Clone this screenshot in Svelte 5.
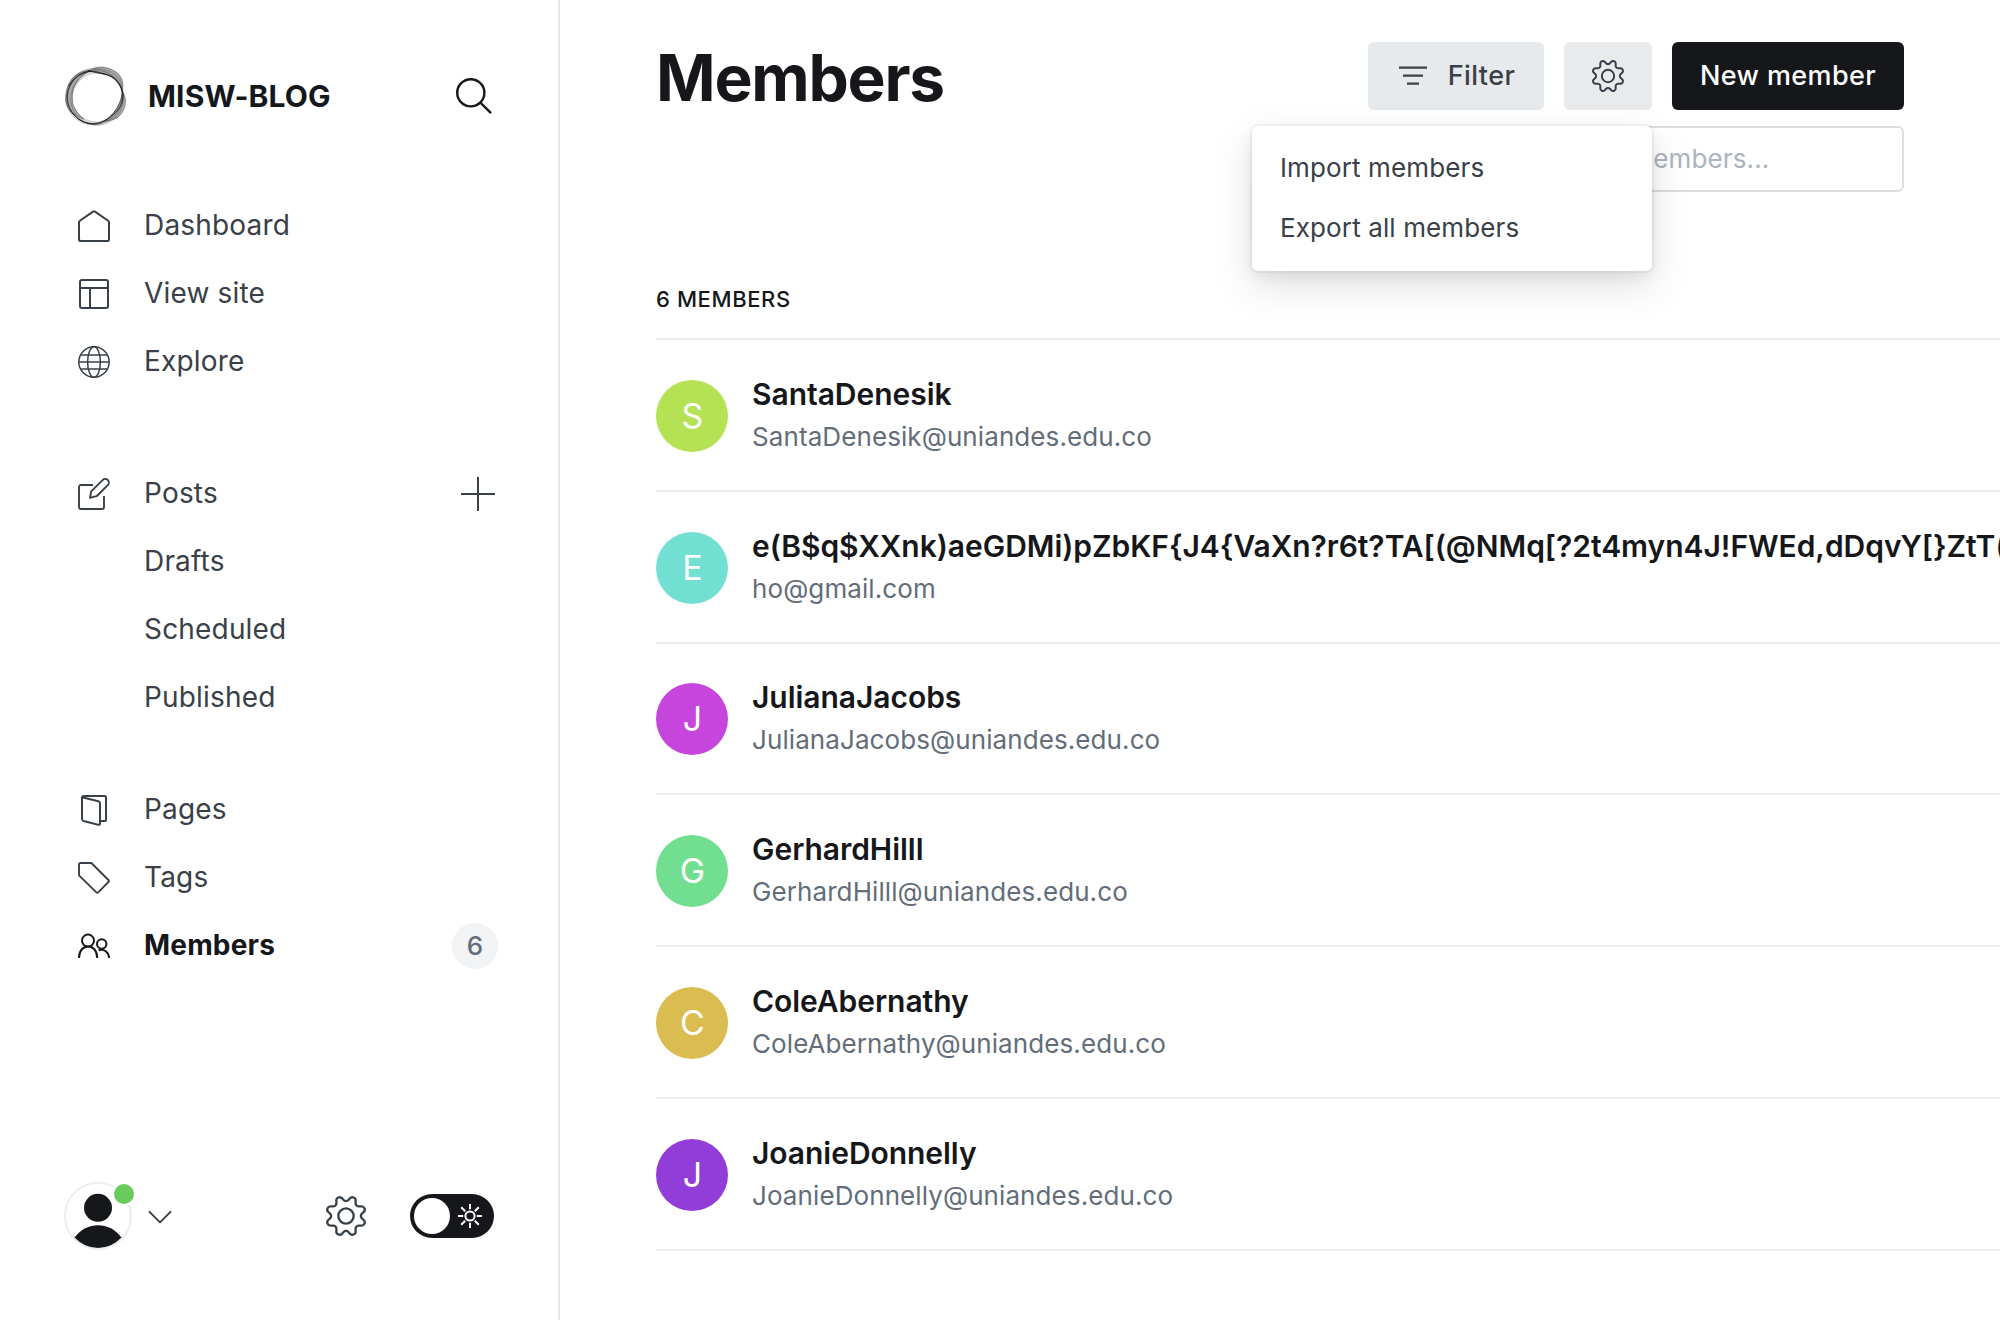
<script>
  const members = [
    { name: 'SantaDenesik', email: 'SantaDenesik@uniandes.edu.co', tone: 'lime' },
    {
      name: 'e(B$q$XXnk)aeGDMi)pZbKF{J4{VaXn?r6t?TA[(@NMq[?2t4myn4J!FWEd,dDqvY[}ZtT(',
      email: 'ho@gmail.com',
      tone: 'teal'
    },
    { name: 'JulianaJacobs', email: 'JulianaJacobs@uniandes.edu.co', tone: 'magenta' },
    { name: 'GerhardHilll', email: 'GerhardHilll@uniandes.edu.co', tone: 'green' },
    { name: 'ColeAbernathy', email: 'ColeAbernathy@uniandes.edu.co', tone: 'gold' },
    { name: 'JoanieDonnelly', email: 'JoanieDonnelly@uniandes.edu.co', tone: 'violet' }
  ];
  const actions = ['Import members', 'Export all members'];
  const postFilters = ['Drafts', 'Scheduled', 'Published'];
</script>

{#snippet cog()}
  <path d="M10.546 2.438a1.957 1.957 0 0 0 2.908 0L14.4 1.4a1.959 1.959 0 0 1 3.41 1.413l-.071 1.4A1.958 1.958 0 0 0 19.79 6.27l1.4-.071A1.959 1.959 0 0 1 22.6 9.606l-1.041.94a1.96 1.96 0 0 0 0 2.909l1.041.94a1.959 1.959 0 0 1-1.413 3.41l-1.4-.071a1.958 1.958 0 0 0-2.056 2.056l.071 1.4A1.959 1.959 0 0 1 14.4 22.6l-.941-1.041a1.959 1.959 0 0 0-2.908 0L9.606 22.6A1.959 1.959 0 0 1 6.2 21.192l.072-1.4a1.958 1.958 0 0 0-2.056-2.056l-1.4.071A1.958 1.958 0 0 1 1.4 14.4l1.041-.94a1.96 1.96 0 0 0 0-2.909L1.4 9.606A1.958 1.958 0 0 1 2.809 6.2l1.4.071a1.958 1.958 0 0 0 2.058-2.06L6.2 2.81A1.959 1.959 0 0 1 9.606 1.4z" />
  <circle cx="12" cy="12" r="4.6" />
{/snippet}

<div class="app">
  <nav class="sidebar">
    <header class="brand">
      <svg class="logo" viewBox="0 0 182 180">
        <path class="band" fill-rule="evenodd" d="M104 2C132 2 166 18 172 42C175 56 168 66 172 78C180 92 184 108 176 124C170 144 160 158 140 163C124 172 104 179 86 178C56 174 34 160 18 142C2 128-3 102 2 80C4 52 22 26 50 14C70 6 86 4 104 2ZM88 23C60 26 38 46 28 70C18 98 22 122 40 142C58 160 80 169 104 166C132 160 154 140 164 112C172 92 172 76 162 58C150 36 118 20 88 23Z" />
        <path class="shade" d="M74 14C88 2 122-4 152 18C178 38 174 62 171 76C166 48 142 24 106 22Z" />
        <path class="shade" d="M2 108C-2 58 24 14 76 14C44 28 16 62 22 104C22 124 40 146 56 160C24 146 8 132 2 108Z" />
        <path class="shade" d="M172 76C184 96 184 118 172 138C160 158 138 164 118 166C150 144 174 112 172 76Z" />
        <ellipse cx="90" cy="93" rx="87" ry="82" transform="rotate(48 90 93)" />
        <ellipse cx="88" cy="95" rx="86" ry="80" transform="rotate(-28 88 95)" />
        <ellipse cx="96" cy="92" rx="85" ry="77" transform="rotate(-60 96 92)" />
        <path class="dark" d="M68 13C90 22 120 22 140 32C164 46 168 64 172 78C178 104 164 130 144 146C118 170 78 184 40 160C14 140 2 112 8 78C16 44 40 20 76 14" />
        <path class="dark" d="M12 60C30 24 70 8 104 20C140 26 162 46 171 76C170 120 132 168 92 174C60 176 30 158 14 130" />
      </svg>
      <span class="brand-name">MISW-BLOG</span>
      <svg class="search" viewBox="0 0 36 36"><circle cx="14.8" cy="14.8" r="13.6" /><path d="M24.4 24.6L35 35.2" /></svg>
    </header>

    <ul class="group">
      <li>
        <svg viewBox="0 0 32 32"><path d="M1 12.4V29.2C1 30.4 1.700 31 2.800 31H29.200C30.400 31 31 30.300 31 29.200V12.400C31 11.700 30.700 11.200 30.100 10.800L17 1.600C16.400 1.100 15.600 1.100 15 1.600L1.900 10.800C1.300 11.200 1 11.700 1 12.400Z" /></svg>
        <span>Dashboard</span>
      </li>
      <li>
        <svg viewBox="0 0 32 32"><rect x="2" y="2" width="28" height="28" rx="2" /><path d="M2 10H30M12 10V30" /></svg>
        <span>View site</span>
      </li>
      <li>
        <svg class="fine" viewBox="0 0 32 32"><circle cx="16" cy="16" r="15.2" /><ellipse cx="16" cy="16" rx="6.4" ry="15.2" /><path d="M1 16H31M3 9H29M3 23H29" /></svg>
        <span>Explore</span>
      </li>
    </ul>

    <ul class="group posts">
      <li>
        <svg class="thin" viewBox="0 0 32 32"><path d="M15 7H3C1.800 7 1 7.800 1 9V29C1 30.200 1.800 31 3 31H24C25.200 31 26 30.200 26 29V18" /><path d="M18.600 18.200L12 19.800L13.200 13.400L24.600 2.100A3 3 0 0 1 29.800 7.200Z" /></svg>
        <span>Posts</span>
        <svg class="plus" viewBox="0 0 34 34"><path d="M17 0V34M0 17H34" /></svg>
      </li>
      {#each postFilters as label}
        <li class="sub"><span>{label}</span></li>
      {/each}
    </ul>

    <ul class="group">
      <li>
        <svg viewBox="0 0 32 32"><path d="M4.100 3.200L20.300 7.300C21.400 7.600 22 8.200 22 9.400V29.400C22 30.500 21.200 31 20.200 30.700L5.600 27C4.600 26.700 4 26.100 4 25V3.800C4 2.500 4.700 2 5.800 2H26.200C27.300 2 28 2.700 28 3.800V25.400C28 26.500 27.300 27 26.200 27H22.600" /></svg>
        <span>Pages</span>
      </li>
      <li>
        <svg class="thin" viewBox="0 0 32 32"><path d="M1 2.600C1 1.600 1.600 1 2.600 1H13.400L30.400 18C31.200 18.800 31.200 19.200 30.400 20L20.200 30.400C19.600 31 19 31 18.400 30.400L1 13.400Z" /></svg>
        <span>Tags</span>
      </li>
      <li class="active">
        <svg viewBox="0 0 32 32"><circle cx="10" cy="10.600" r="6" /><circle cx="23.700" cy="14" r="4.700" /><path d="M1 28C1 12.500 19.200 12.500 19.200 28M20.600 20.400C25.800 18.200 31 22.400 31 28" /></svg>
        <span>Members</span>
        <b class="count">6</b>
      </li>
    </ul>

    <footer>
      <div class="user">
        <svg viewBox="0 0 64 64"><circle cx="32" cy="23.800" r="14" /><path d="M8.500 53.600C20.500 37 43.500 37 55.500 53.600A32 32 0 0 1 8.500 53.600Z" /></svg>
        <i class="dot"></i>
      </div>
      <svg class="chevron" viewBox="0 0 24 14"><path d="M1 1.400L12 12.400L23 1.400" /></svg>
      <svg class="cog" viewBox="0 0 24 24">{@render cog()}</svg>
      <div class="toggle">
        <i class="knob"></i>
        <svg viewBox="0 0 24 24"><circle cx="12" cy="12" r="4.600" /><path d="M12 0V5.200M12 18.800V24M0 12H5.200M18.800 12H24M3.200 3.200L7.200 7.200M16.800 16.800L20.800 20.800M3.200 20.800L7.200 16.800M16.800 7.200L20.800 3.200" /></svg>
      </div>
    </footer>
  </nav>

  <main>
    <div class="top">
      <h1>Members</h1>
      <div class="controls">
        <div class="buttons">
          <button class="filter">
            <svg viewBox="0 0 28 20"><path d="M0 1.600H28M4 9.600H24M8 17.600H20" /></svg>
            <span>Filter</span>
          </button>
          <div class="menu-anchor">
            <button class="settings"><svg viewBox="0 0 24 24">{@render cog()}</svg></button>
            <div class="menu">
              {#each actions as action}
                <span>{action}</span>
              {/each}
            </div>
          </div>
          <button class="new">New member</button>
        </div>
        <div class="field">Search members...</div>
      </div>
    </div>

    <div class="list-head">6 members</div>
    <div class="list">
      {#each members as member}
        <div class="row">
          <div class="avatar {member.tone}">{member.name[0].toUpperCase()}</div>
          <div class="who">
            <h3>{member.name}</h3>
            <p>{member.email}</p>
          </div>
        </div>
      {/each}
    </div>
  </main>
</div>

<style>
  :global(body) { background: #fff; }
  .app {
    display: flex;
    width: 2000px;
    height: 1320px;
    overflow: hidden;
    background: #fff;
    font-family: Inter, "Liberation Sans", sans-serif;
    color: #15171a;
  }
  svg {
    display: block;
    flex: none;
    fill: none;
    stroke: currentColor;
    stroke-width: 2;
    stroke-linejoin: round;
    overflow: visible;
  }
  h1, h3, p, ul { margin: 0; padding: 0; }

  .sidebar {
    box-sizing: border-box;
    width: 560px;
    flex: none;
    display: flex;
    flex-direction: column;
    border-right: 2px solid #e6e7e8;
  }
  .brand { display: flex; align-items: center; height: 60px; padding: 66px 66px 0 65px; }
  .logo { width: 61px; height: 60px; stroke: #222; stroke-width: 2; }
  .logo .band { fill: #777; fill-opacity: 0.3; stroke: none; }
  .logo .shade { fill: #555; fill-opacity: 0.36; stroke: #444; stroke-width: 1.500; }
  .logo ellipse { stroke-opacity: 0.35; }
  .logo .dark { stroke: #111; stroke-opacity: 0.8; stroke-width: 2.800; }
  .brand-name { margin-left: 22px; font-size: 30px; font-weight: 700; line-height: 36px; letter-spacing: 0.130px; }
  .search { width: 36px; height: 36px; margin-left: auto; stroke-width: 2.400; }

  .group { list-style: none; padding: 0 60px 0 78px; margin-bottom: 44px; color: #394047; }
  .brand + .group { margin-top: 65px; margin-bottom: 64px; }
  .group li { display: flex; align-items: center; height: 68px; font-size: 28px; letter-spacing: 0.180px; }
  .group li > svg:first-child { width: 32px; height: 32px; margin: 2px 34px 0 0; }
  .group .sub { padding-left: 66px; }
  .group .active { color: #15171a; font-weight: 700; letter-spacing: 0.180px; }
  .thin { stroke-width: 1.900; }
  .fine { stroke-width: 1.500; }
  .group .plus { width: 34px; height: 34px; margin: 2px 3px 0 auto; }
  .count {
    width: 46px; height: 46px; margin: 1px 0 0 auto;
    border-radius: 50%; background: #f1f3f4; color: #626d79;
    font-size: 26px; font-weight: 500; line-height: 46px; text-align: center;
  }

  footer { display: flex; align-items: center; margin: auto 64px 70px 64px; height: 68px; color: #394047; }
  .user { position: relative; box-sizing: border-box; width: 68px; height: 68px; border: 2px solid #ebeef0; border-radius: 50%; }
  .user svg { width: 64px; height: 64px; fill: #15171a; stroke: none; }
  .dot { position: absolute; top: 0; right: -4px; width: 20px; height: 20px; border-radius: 50%; background: #69cb5b; border: 2px solid #fff; margin: -2px; }
  .chevron { width: 24px; height: 14px; margin: 2px 0 0 16px; }
  .cog { width: 40px; height: 40px; margin-left: 154px; stroke-width: 1.400; }
  .toggle {
    display: flex; align-items: center; box-sizing: border-box;
    width: 84px; height: 44px; padding: 0 12px 0 4px; margin-left: auto;
    justify-content: space-between;
    border-radius: 22px; background: #15171a; color: #fff;
  }
  .knob { width: 36px; height: 36px; border-radius: 50%; background: #fff; }
  .toggle svg { width: 24px; height: 24px; }

  main { flex: 1; min-width: 0; padding: 42px 0 0 96px; }
  .top { display: flex; justify-content: space-between; align-items: flex-start; height: 234px; padding-right: 96px; }
  h1 { font-size: 64px; line-height: 76px; font-weight: 700; letter-spacing: -1.250px; margin-top: -2px; }
  .controls { display: flex; flex-direction: column; align-items: flex-end; }
  .buttons { display: flex; gap: 20px; }
  button {
    display: flex; align-items: center; justify-content: center;
    height: 68px; padding: 0; border: 0; border-radius: 6px;
    font: 500 27px/34px Inter, "Liberation Sans", sans-serif; letter-spacing: 0.400px;
    color: #394047;
  }
  .filter { box-sizing: border-box; width: 176px; padding-left: 2px; gap: 21px; background: #e6eaed; }
  .filter svg { width: 28px; height: 20px; stroke-width: 2.400; }
  .settings { width: 88px; background: #e9eaeb; }
  .settings svg { width: 32px; height: 32px; stroke-width: 1.500; }
  .new { width: 232px; background: #15171a; color: #fff; }
  .menu-anchor { position: relative; }
  .menu {
    position: absolute; z-index: 2; top: 84px; right: 0;
    box-sizing: border-box; width: 400px; height: 145px; padding: 12px 28px;
    display: flex; flex-direction: column;
    border-radius: 6px; background: #fff;
    box-shadow: 0 0 0 2px rgba(0, 0, 0, 0.040), 0 14px 40px rgba(0, 0, 0, 0.130), 0 6px 14px rgba(0, 0, 0, 0.060);
    font-size: 26px; line-height: 60px; letter-spacing: 0.120px; color: #394047;
  }
  .field {
    box-sizing: border-box; width: 400px; height: 66px; margin-top: 16px; padding-left: 30px;
    border: 2px solid #dddedf; border-radius: 6px;
    font-size: 26px; line-height: 62px; letter-spacing: 0.120px; color: #abb4be;
  }

  .list-head { height: 62px; font-size: 22px; line-height: 46px; font-weight: 500; letter-spacing: 0.600px; text-transform: uppercase; }
  .list { border-top: 2px solid #ececed; }
  .row { display: flex; align-items: center; box-sizing: border-box; height: 151.800px; padding-top: 2px; border-bottom: 2px solid #ececed; }
  .avatar {
    width: 72px; height: 72px; flex: none; margin-right: 24px;
    border-radius: 50%; color: #fff; font-size: 34px; line-height: 72px; text-align: center; text-indent: 1px;
  }
  .who { white-space: nowrap; }
  h3 { font-size: 30px; line-height: 42px; font-weight: 600; letter-spacing: -0.040px; }
  p { font-size: 26px; line-height: 44px; letter-spacing: 0.090px; color: #626d79; }
  .lime { background: #b5e155; }
  .teal { background: #72dfd3; }
  .magenta { background: #c645dc; }
  .green { background: #72de8f; }
  .gold { background: #dbbc50; }
  .violet { background: #923dd8; }
</style>
